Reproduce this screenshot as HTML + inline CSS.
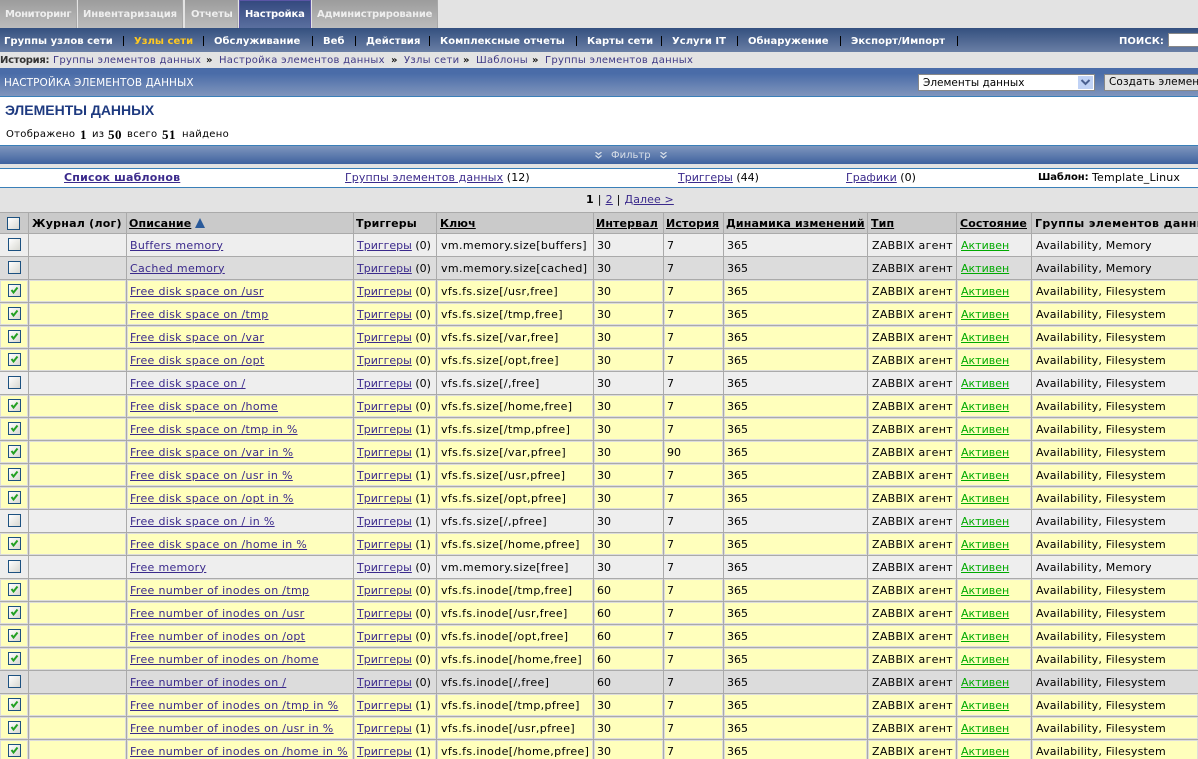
<!DOCTYPE html>
<html lang="ru"><head><meta charset="utf-8"><title>Элементы данных</title>
<style>
html,body{margin:0;padding:0;width:1198px;height:759px;overflow:hidden;background:#fff}
body{position:relative;font:11px "DejaVu Sans","Liberation Sans",sans-serif;color:#000}
.a{position:absolute;white-space:nowrap}
a{color:#3b2a8c;text-decoration:underline}
.tab{position:absolute;top:0;height:28px;box-sizing:border-box;background:linear-gradient(#9c9c9c,#bcbcbc);color:#eee;font:bold 10px/30px "DejaVu Sans",sans-serif;padding-left:5px;border-right:1px solid #a8a8a8;letter-spacing:-.2px;white-space:nowrap}
.nav{position:absolute;top:35px;color:#fff;font:bold 10px/14px "DejaVu Sans",sans-serif;white-space:nowrap;letter-spacing:.03px}
.sep{position:absolute;top:36px;width:1px;height:10px;background:#000}
.h{position:absolute;top:52px;font-size:10px;line-height:17px;color:#3f3a85;letter-spacing:.28px;white-space:nowrap}
.s{font-family:"Liberation Serif",serif;font-weight:bold;font-size:13px;letter-spacing:.5px}
table{position:absolute;left:0;top:212px;border-collapse:separate;border-spacing:0;table-layout:fixed;width:1198px}
th,td{box-sizing:border-box;height:23px;padding:0 0 0 3px;border-right:1px solid #aaa;border-bottom:1px solid #aaa;white-space:nowrap;overflow:hidden;text-align:left;font-size:11px;font-weight:normal}
th{height:22px;background:#cacaca;border-top:1px solid #aaa;font-weight:bold;letter-spacing:.12px}
th a{color:#000}
th:nth-child(2){letter-spacing:.25px}
th:nth-child(4),th:nth-child(6),th:nth-child(7),th:nth-child(8){padding-left:2px}
th:nth-child(11){letter-spacing:.4px}
tr.o td{background:#eee}
tr.e td{background:#dcdcdc}
tr.y td{background:#ffffbc;box-shadow:inset 1px 1px 0 #dcdcdc,inset -1px -1px 0 #dcdcdc}
td:nth-child(3){letter-spacing:.32px}
td:nth-child(4){letter-spacing:0}
td:nth-child(5){padding-left:4px;letter-spacing:.38px}
td:nth-child(9){padding-left:4px;letter-spacing:.3px}
td:nth-child(10){padding-left:4px}
td:nth-child(11){padding-left:4px;letter-spacing:.2px}
td:last-child,th:last-child{border-right:0}
.g{color:#00aa00}
.c{display:block;width:13px;height:13px;box-sizing:border-box;margin-left:5px;border:1px solid #1c5180;background:linear-gradient(135deg,#fff,#d8d8d2);position:relative;top:-1px}
.c svg{position:absolute;left:0;top:0}
</style></head><body>
<div class="a" style="left:0;top:0;width:1198px;height:28px;background:#e3e3e3"></div>
<div class="tab" style="left:0;width:77px;letter-spacing:-.35px">Мониторинг</div>
<div class="tab" style="left:78px;width:105px;letter-spacing:-.1px">Инвентаризация</div>
<div class="tab" style="left:185px;width:53px;padding-left:6px">Отчеты</div>
<div class="tab" style="left:239px;width:72px;background:linear-gradient(#34497f,#5a6f9f);color:#fff;border:1px solid #5a55a5;border-bottom:0;line-height:28px">Настройка</div>
<div class="tab" style="left:312px;width:126px">Администрирование</div>

<div class="a" style="left:0;top:28px;width:1198px;height:24px;background:linear-gradient(#34507f,#6a7fa5)"></div>
<div class="nav" style="left:4px">Группы узлов сети</div><div class="sep" style="left:123px"></div>
<div class="nav" style="left:134px;color:#ffc820">Узлы сети</div><div class="sep" style="left:203px"></div>
<div class="nav" style="left:214px">Обслуживание</div><div class="sep" style="left:312px"></div>
<div class="nav" style="left:323px">Веб</div><div class="sep" style="left:355px"></div>
<div class="nav" style="left:366px">Действия</div><div class="sep" style="left:429px"></div>
<div class="nav" style="left:440px">Комплексные отчеты</div><div class="sep" style="left:576px"></div>
<div class="nav" style="left:587px">Карты сети</div><div class="sep" style="left:661px"></div>
<div class="nav" style="left:672px">Услуги IT</div><div class="sep" style="left:737px"></div>
<div class="nav" style="left:748px">Обнаружение</div><div class="sep" style="left:840px"></div>
<div class="nav" style="left:851px">Экспорт/Импорт</div><div class="sep" style="left:957px"></div>
<div class="nav" style="left:1119px">ПОИСК:</div>
<div class="a" style="left:1168px;top:33px;width:40px;height:14px;box-sizing:border-box;background:#fff;border:1px solid #888"></div>

<div class="a" style="left:0;top:52px;width:1198px;height:16px;background:#e3e3e3"></div>
<b class="h" style="left:0;color:#333;letter-spacing:-.3px">История:</b>
<span class="h" style="left:53px">Группы элементов данных</span><b class="h" style="left:206px;color:#111">»</b>
<span class="h" style="left:219px">Настройка элементов данных</span><b class="h" style="left:391px;color:#111">»</b>
<span class="h" style="left:404px">Узлы сети</span><b class="h" style="left:463px;color:#111">»</b>
<span class="h" style="left:476px">Шаблоны</span><b class="h" style="left:532px;color:#111">»</b>
<span class="h" style="left:545px">Группы элементов данных</span>

<div class="a" style="left:0;top:68px;width:1198px;height:28px;background:linear-gradient(#4a6ca8 20%,#8095bc);color:#fff;line-height:30px;text-indent:4px;font-size:10.5px;letter-spacing:.08px">НАСТРОЙКА ЭЛЕМЕНТОВ ДАННЫХ</div>
<div class="a" style="left:0;top:96px;width:1198px;height:1px;background:#3a7fb8"></div>
<div class="a" style="left:918px;top:74px;width:177px;height:17px;box-sizing:border-box;background:#fff;border:1px solid #888;line-height:16px;padding-left:4px;font-size:10.5px">Элементы данных
<svg style="position:absolute;right:1px;top:1px" width="15" height="13"><rect width="15" height="13" fill="#c0d2f5"/><path d="M3.5 4l4 4 4-4" fill="none" stroke="#4a6090" stroke-width="2"/></svg></div>
<div class="a" style="left:1104px;top:74px;width:110px;height:17px;box-sizing:border-box;background:#e3e3e3;border:1px solid #888;line-height:14px;padding-left:4px;font-size:10.5px;letter-spacing:.1px">Создать элемент</div>

<div class="a" style="left:5px;top:102px;font:bold 14px/17px 'Liberation Sans',sans-serif;color:#1e3a80">ЭЛЕМЕНТЫ ДАННЫХ</div>
<div class="a" style="left:0;top:128px;width:300px;height:13px;font-size:10px;line-height:13px;letter-spacing:.3px">
<span class="a" style="left:6px">Отображено</span><span class="a s" style="left:80px">1</span><span class="a" style="left:92px">из</span><span class="a s" style="left:108px">50</span><span class="a" style="left:127px">всего</span><span class="a s" style="left:162px">51</span><span class="a" style="left:182px">найдено</span></div>

<div class="a" style="left:0;top:145px;width:1198px;height:19px;box-sizing:border-box;border-top:1px solid #3a7fb8;background:linear-gradient(#7f96bd,#3f629f);color:#d8dfe8;font-size:10px;line-height:19px">
<svg class="a" style="left:595px;top:6px" width="7" height="7"><path d="M.5 0l3 2.5 3-2.5M.5 3.5l3 2.5 3-2.5" fill="none" stroke="#d8dfe8" stroke-width="1.2"/></svg>
<span class="a" style="left:611px;top:0">Фильтр</span>
<svg class="a" style="left:660px;top:6px" width="7" height="7"><path d="M.5 0l3 2.5 3-2.5M.5 3.5l3 2.5 3-2.5" fill="none" stroke="#d8dfe8" stroke-width="1.2"/></svg></div>
<div class="a" style="left:0;top:164px;width:1198px;height:48px;background:#e3e3e3"></div>
<div class="a" style="left:0;top:168px;width:1198px;height:20px;box-sizing:border-box;background:#fff;border-top:1px solid #3a7fb8;border-bottom:1px solid #3a7fb8"></div>
<a class="a" style="left:64px;top:171px;font-weight:bold;line-height:14px;letter-spacing:.2px" href="#">Список шаблонов</a>
<span class="a" style="left:345px;top:171px;line-height:14px;letter-spacing:.1px"><a href="#">Группы элементов данных</a> (12)</span>
<span class="a" style="left:678px;top:171px;line-height:14px"><a href="#">Триггеры</a> (44)</span>
<span class="a" style="left:846px;top:171px;line-height:14px"><a href="#">Графики</a> (0)</span>
<b class="a" style="left:1038px;top:171px;line-height:14px;font-size:10px;letter-spacing:-.1px">Шаблон:</b>
<span class="a" style="left:1092px;top:171px;line-height:14px;letter-spacing:.2px">Template_Linux</span>
<span class="a" style="left:586px;top:193px;line-height:14px;letter-spacing:.3px"><b>1</b> | <a href="#">2</a> | <a href="#" style="letter-spacing:.1px">Далее &gt;</a></span>

<table>
<colgroup><col style="width:29px"><col style="width:98px"><col style="width:227px"><col style="width:83px"><col style="width:157px"><col style="width:70px"><col style="width:60px"><col style="width:144px"><col style="width:89px"><col style="width:75px"><col style="width:166px"></colgroup>
<tr><th><i class="c" style="margin-left:4px;top:0"></i></th><th>Журнал (лог)</th><th style="padding-left:2px"><a href="#">Описание</a> <svg width="10" height="10" style="vertical-align:-1px"><path d="M5 0L10 10H0z" fill="#2a5a9a"/></svg></th><th>Триггеры</th><th><a href="#">Ключ</a></th><th><a href="#">Интервал</a></th><th><a href="#">История</a></th><th><a href="#">Динамика изменений</a></th><th><a href="#">Тип</a></th><th><a href="#">Состояние</a></th><th>Группы элементов данных</th></tr>
<tr class="o"><td><i class="c"></i></td><td></td><td><a href="#">Buffers memory</a></td><td><a href="#">Триггеры</a> (0)</td><td>vm.memory.size[buffers]</td><td>30</td><td>7</td><td>365</td><td>ZABBIX агент</td><td><a class="g" href="#">Активен</a></td><td>Availability, Memory</td></tr>
<tr class="e"><td><i class="c"></i></td><td></td><td><a href="#">Cached memory</a></td><td><a href="#">Триггеры</a> (0)</td><td>vm.memory.size[cached]</td><td>30</td><td>7</td><td>365</td><td>ZABBIX агент</td><td><a class="g" href="#">Активен</a></td><td>Availability, Memory</td></tr>
<tr class="y"><td><i class="c"><svg width="11" height="11"><path d="M2.5 5l2 2.5 4-5" fill="none" stroke="#22a022" stroke-width="2"/></svg></i></td><td></td><td><a href="#">Free disk space on /usr</a></td><td><a href="#">Триггеры</a> (0)</td><td>vfs.fs.size[/usr,free]</td><td>30</td><td>7</td><td>365</td><td>ZABBIX агент</td><td><a class="g" href="#">Активен</a></td><td>Availability, Filesystem</td></tr>
<tr class="y"><td><i class="c"><svg width="11" height="11"><path d="M2.5 5l2 2.5 4-5" fill="none" stroke="#22a022" stroke-width="2"/></svg></i></td><td></td><td><a href="#">Free disk space on /tmp</a></td><td><a href="#">Триггеры</a> (0)</td><td>vfs.fs.size[/tmp,free]</td><td>30</td><td>7</td><td>365</td><td>ZABBIX агент</td><td><a class="g" href="#">Активен</a></td><td>Availability, Filesystem</td></tr>
<tr class="y"><td><i class="c"><svg width="11" height="11"><path d="M2.5 5l2 2.5 4-5" fill="none" stroke="#22a022" stroke-width="2"/></svg></i></td><td></td><td><a href="#">Free disk space on /var</a></td><td><a href="#">Триггеры</a> (0)</td><td>vfs.fs.size[/var,free]</td><td>30</td><td>7</td><td>365</td><td>ZABBIX агент</td><td><a class="g" href="#">Активен</a></td><td>Availability, Filesystem</td></tr>
<tr class="y"><td><i class="c"><svg width="11" height="11"><path d="M2.5 5l2 2.5 4-5" fill="none" stroke="#22a022" stroke-width="2"/></svg></i></td><td></td><td><a href="#">Free disk space on /opt</a></td><td><a href="#">Триггеры</a> (0)</td><td>vfs.fs.size[/opt,free]</td><td>30</td><td>7</td><td>365</td><td>ZABBIX агент</td><td><a class="g" href="#">Активен</a></td><td>Availability, Filesystem</td></tr>
<tr class="o"><td><i class="c"></i></td><td></td><td><a href="#">Free disk space on /</a></td><td><a href="#">Триггеры</a> (0)</td><td>vfs.fs.size[/,free]</td><td>30</td><td>7</td><td>365</td><td>ZABBIX агент</td><td><a class="g" href="#">Активен</a></td><td>Availability, Filesystem</td></tr>
<tr class="y"><td><i class="c"><svg width="11" height="11"><path d="M2.5 5l2 2.5 4-5" fill="none" stroke="#22a022" stroke-width="2"/></svg></i></td><td></td><td><a href="#">Free disk space on /home</a></td><td><a href="#">Триггеры</a> (0)</td><td>vfs.fs.size[/home,free]</td><td>30</td><td>7</td><td>365</td><td>ZABBIX агент</td><td><a class="g" href="#">Активен</a></td><td>Availability, Filesystem</td></tr>
<tr class="y"><td><i class="c"><svg width="11" height="11"><path d="M2.5 5l2 2.5 4-5" fill="none" stroke="#22a022" stroke-width="2"/></svg></i></td><td></td><td><a href="#">Free disk space on /tmp in %</a></td><td><a href="#">Триггеры</a> (1)</td><td>vfs.fs.size[/tmp,pfree]</td><td>30</td><td>7</td><td>365</td><td>ZABBIX агент</td><td><a class="g" href="#">Активен</a></td><td>Availability, Filesystem</td></tr>
<tr class="y"><td><i class="c"><svg width="11" height="11"><path d="M2.5 5l2 2.5 4-5" fill="none" stroke="#22a022" stroke-width="2"/></svg></i></td><td></td><td><a href="#">Free disk space on /var in %</a></td><td><a href="#">Триггеры</a> (1)</td><td>vfs.fs.size[/var,pfree]</td><td>30</td><td>90</td><td>365</td><td>ZABBIX агент</td><td><a class="g" href="#">Активен</a></td><td>Availability, Filesystem</td></tr>
<tr class="y"><td><i class="c"><svg width="11" height="11"><path d="M2.5 5l2 2.5 4-5" fill="none" stroke="#22a022" stroke-width="2"/></svg></i></td><td></td><td><a href="#">Free disk space on /usr in %</a></td><td><a href="#">Триггеры</a> (1)</td><td>vfs.fs.size[/usr,pfree]</td><td>30</td><td>7</td><td>365</td><td>ZABBIX агент</td><td><a class="g" href="#">Активен</a></td><td>Availability, Filesystem</td></tr>
<tr class="y"><td><i class="c"><svg width="11" height="11"><path d="M2.5 5l2 2.5 4-5" fill="none" stroke="#22a022" stroke-width="2"/></svg></i></td><td></td><td><a href="#">Free disk space on /opt in %</a></td><td><a href="#">Триггеры</a> (1)</td><td>vfs.fs.size[/opt,pfree]</td><td>30</td><td>7</td><td>365</td><td>ZABBIX агент</td><td><a class="g" href="#">Активен</a></td><td>Availability, Filesystem</td></tr>
<tr class="o"><td><i class="c"></i></td><td></td><td><a href="#">Free disk space on / in %</a></td><td><a href="#">Триггеры</a> (1)</td><td>vfs.fs.size[/,pfree]</td><td>30</td><td>7</td><td>365</td><td>ZABBIX агент</td><td><a class="g" href="#">Активен</a></td><td>Availability, Filesystem</td></tr>
<tr class="y"><td><i class="c"><svg width="11" height="11"><path d="M2.5 5l2 2.5 4-5" fill="none" stroke="#22a022" stroke-width="2"/></svg></i></td><td></td><td><a href="#">Free disk space on /home in %</a></td><td><a href="#">Триггеры</a> (1)</td><td>vfs.fs.size[/home,pfree]</td><td>30</td><td>7</td><td>365</td><td>ZABBIX агент</td><td><a class="g" href="#">Активен</a></td><td>Availability, Filesystem</td></tr>
<tr class="o"><td><i class="c"></i></td><td></td><td><a href="#">Free memory</a></td><td><a href="#">Триггеры</a> (0)</td><td>vm.memory.size[free]</td><td>30</td><td>7</td><td>365</td><td>ZABBIX агент</td><td><a class="g" href="#">Активен</a></td><td>Availability, Memory</td></tr>
<tr class="y"><td><i class="c"><svg width="11" height="11"><path d="M2.5 5l2 2.5 4-5" fill="none" stroke="#22a022" stroke-width="2"/></svg></i></td><td></td><td><a href="#">Free number of inodes on /tmp</a></td><td><a href="#">Триггеры</a> (0)</td><td>vfs.fs.inode[/tmp,free]</td><td>60</td><td>7</td><td>365</td><td>ZABBIX агент</td><td><a class="g" href="#">Активен</a></td><td>Availability, Filesystem</td></tr>
<tr class="y"><td><i class="c"><svg width="11" height="11"><path d="M2.5 5l2 2.5 4-5" fill="none" stroke="#22a022" stroke-width="2"/></svg></i></td><td></td><td><a href="#">Free number of inodes on /usr</a></td><td><a href="#">Триггеры</a> (0)</td><td>vfs.fs.inode[/usr,free]</td><td>60</td><td>7</td><td>365</td><td>ZABBIX агент</td><td><a class="g" href="#">Активен</a></td><td>Availability, Filesystem</td></tr>
<tr class="y"><td><i class="c"><svg width="11" height="11"><path d="M2.5 5l2 2.5 4-5" fill="none" stroke="#22a022" stroke-width="2"/></svg></i></td><td></td><td><a href="#">Free number of inodes on /opt</a></td><td><a href="#">Триггеры</a> (0)</td><td>vfs.fs.inode[/opt,free]</td><td>60</td><td>7</td><td>365</td><td>ZABBIX агент</td><td><a class="g" href="#">Активен</a></td><td>Availability, Filesystem</td></tr>
<tr class="y"><td><i class="c"><svg width="11" height="11"><path d="M2.5 5l2 2.5 4-5" fill="none" stroke="#22a022" stroke-width="2"/></svg></i></td><td></td><td><a href="#">Free number of inodes on /home</a></td><td><a href="#">Триггеры</a> (0)</td><td>vfs.fs.inode[/home,free]</td><td>60</td><td>7</td><td>365</td><td>ZABBIX агент</td><td><a class="g" href="#">Активен</a></td><td>Availability, Filesystem</td></tr>
<tr class="e"><td><i class="c"></i></td><td></td><td><a href="#">Free number of inodes on /</a></td><td><a href="#">Триггеры</a> (0)</td><td>vfs.fs.inode[/,free]</td><td>60</td><td>7</td><td>365</td><td>ZABBIX агент</td><td><a class="g" href="#">Активен</a></td><td>Availability, Filesystem</td></tr>
<tr class="y"><td><i class="c"><svg width="11" height="11"><path d="M2.5 5l2 2.5 4-5" fill="none" stroke="#22a022" stroke-width="2"/></svg></i></td><td></td><td><a href="#">Free number of inodes on /tmp in %</a></td><td><a href="#">Триггеры</a> (1)</td><td>vfs.fs.inode[/tmp,pfree]</td><td>30</td><td>7</td><td>365</td><td>ZABBIX агент</td><td><a class="g" href="#">Активен</a></td><td>Availability, Filesystem</td></tr>
<tr class="y"><td><i class="c"><svg width="11" height="11"><path d="M2.5 5l2 2.5 4-5" fill="none" stroke="#22a022" stroke-width="2"/></svg></i></td><td></td><td><a href="#">Free number of inodes on /usr in %</a></td><td><a href="#">Триггеры</a> (1)</td><td>vfs.fs.inode[/usr,pfree]</td><td>30</td><td>7</td><td>365</td><td>ZABBIX агент</td><td><a class="g" href="#">Активен</a></td><td>Availability, Filesystem</td></tr>
<tr class="y"><td><i class="c"><svg width="11" height="11"><path d="M2.5 5l2 2.5 4-5" fill="none" stroke="#22a022" stroke-width="2"/></svg></i></td><td></td><td><a href="#">Free number of inodes on /home in %</a></td><td><a href="#">Триггеры</a> (1)</td><td>vfs.fs.inode[/home,pfree]</td><td>30</td><td>7</td><td>365</td><td>ZABBIX агент</td><td><a class="g" href="#">Активен</a></td><td>Availability, Filesystem</td></tr>
</table>
</body></html>
